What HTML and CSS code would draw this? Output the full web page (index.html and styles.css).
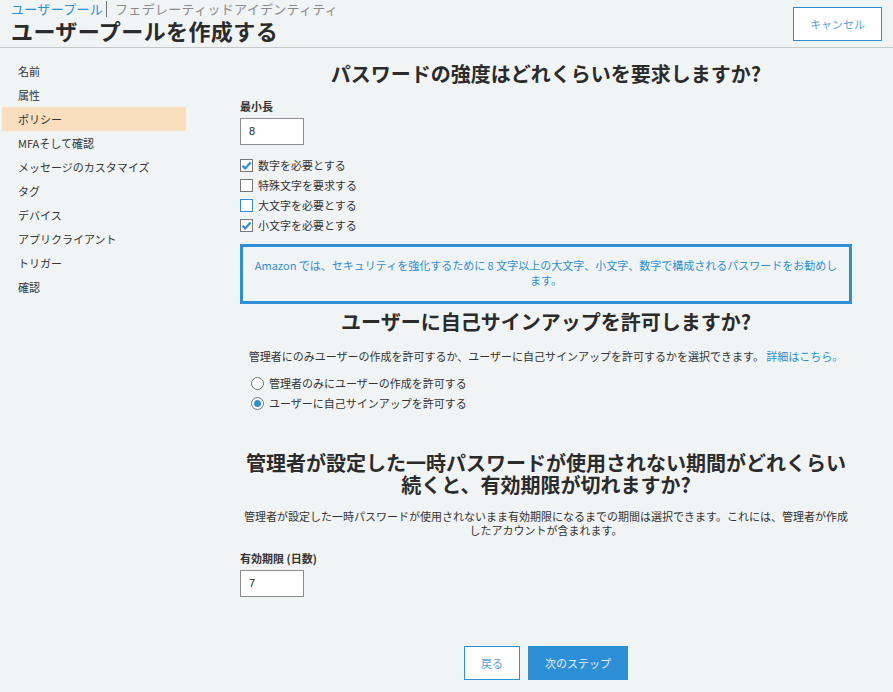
FILE: index.html
```html
<!DOCTYPE html>
<html lang="ja">
<head>
<meta charset="utf-8">
<link rel="stylesheet" href="styles.css">
</head>
<body>
<header class="header">
  <div class="header-left">
    <div class="crumbs"><a class="crumb-link">ユーザープール</a><span class="crumb-other">フェデレーティッドアイデンティティ</span></div>
    <h1 class="page-title">ユーザープールを作成する</h1>
  </div>
  <button class="btn btn-outline cancel">キャンセル</button>
</header>
<div class="layout">
  <nav class="sidebar">
    <div class="nav-item">名前</div>
    <div class="nav-item">属性</div>
    <div class="nav-item active">ポリシー</div>
    <div class="nav-item">MFAそして確認</div>
    <div class="nav-item">メッセージのカスタマイズ</div>
    <div class="nav-item">タグ</div>
    <div class="nav-item">デバイス</div>
    <div class="nav-item">アプリクライアント</div>
    <div class="nav-item">トリガー</div>
    <div class="nav-item">確認</div>
  </nav>
  <main class="main">
    <h2 class="section-title first">パスワードの強度はどれくらいを要求しますか?</h2>
    <div class="field-label">最小長</div>
    <div class="input">8</div>
    <div class="checks">
      <div class="check-row"><span class="checkbox checked"><svg viewBox="0 0 13 13" width="13" height="13"><path d="M2.5 6.8 L5.2 9.4 L10.6 3.4" fill="none" stroke="#2b8fd6" stroke-width="2.2"/></svg></span>数字を必要とする</div>
      <div class="check-row"><span class="checkbox"></span>特殊文字を要求する</div>
      <div class="check-row"><span class="checkbox focus"></span>大文字を必要とする</div>
      <div class="check-row"><span class="checkbox checked"><svg viewBox="0 0 13 13" width="13" height="13"><path d="M2.5 6.8 L5.2 9.4 L10.6 3.4" fill="none" stroke="#2b8fd6" stroke-width="2.2"/></svg></span>小文字を必要とする</div>
    </div>
    <div class="info-box">Amazon では、セキュリティを強化するために 8 文字以上の大文字、小文字、数字で構成されるパスワードをお勧めします。</div>
    <h2 class="section-title second">ユーザーに自己サインアップを許可しますか?</h2>
    <p class="desc">管理者にのみユーザーの作成を許可するか、ユーザーに自己サインアップを許可するかを選択できます。 <a class="link">詳細はこちら。</a></p>
    <div class="radios">
      <div class="radio-row"><span class="radio"></span>管理者のみにユーザーの作成を許可する</div>
      <div class="radio-row"><span class="radio selected"></span>ユーザーに自己サインアップを許可する</div>
    </div>
    <h2 class="section-title third"><span class="line">管理者が設定した一時パスワードが使用されない期間がどれくらい</span><span class="line">続くと、有効期限が切れますか?</span></h2>
    <p class="desc2">管理者が設定した一時パスワードが使用されないまま有効期限になるまでの期間は選択できます。これには、管理者が作成したアカウントが含まれます。</p>
    <div class="field-label second-label">有効期限 (日数)</div>
    <div class="input">7</div>
    <div class="actions">
      <button class="btn btn-outline back">戻る</button>
      <button class="btn btn-primary next">次のステップ</button>
    </div>
  </main>
</div>
</body>
</html>
```

FILE: styles.css
```css
* { box-sizing: border-box; }
html, body {
  margin: 0;
  padding: 0;
  background: #f1f4f5;
  font-family: "Noto Sans CJK JP", "Liberation Sans", sans-serif;
  color: #333;
}
.header {
  height: 48px;
  border-bottom: 1px solid #c6c9ca;
  display: flex;
  justify-content: space-between;
  align-items: flex-start;
  padding: 0 11px 0 11px;
}
.crumbs {
  font-size: 13px;
  line-height: 18px;
  margin-top: 0;
  display: flex;
  align-items: center;
  letter-spacing: 0.3px;
}
.crumb-link { color: #2b8fd6; padding-right: 3px; }
.crumb-other {
  color: #8a8a8a;
  border-left: 1px solid #777;
  padding-left: 8px;
  line-height: 16px;
}
.page-title {
  margin: 0;
  font-size: 22px;
  line-height: 24px;
  font-weight: 700;
  color: #2b2b2b;
  letter-spacing: 0.4px;
}
.btn {
  font-family: inherit;
  font-size: 11px;
  cursor: pointer;
}
.btn-outline {
  background: #fff;
  border: 1px solid #2d8fd5;
  color: #5a9fd6;
}
.btn-primary {
  background: #2d8fd5;
  border: 1px solid #2d8fd5;
  color: #e8f2fb;
}
.cancel {
  margin-top: 7px;
  width: 89px;
  height: 34px;
}
.layout {
  display: flex;
}
.sidebar {
  width: 186px;
  padding-top: 11px;
  padding-left: 2px;
}
.nav-item {
  height: 24px;
  line-height: 24px;
  font-size: 11px;
  padding-left: 16px;
  color: #333;
}
.nav-item.active { background: #f9dfbd; }
.main {
  width: 612px;
  margin-left: 54px;
  display: flex;
  flex-direction: column;
}
.section-title {
  margin: 0;
  text-align: center;
  font-size: 20px;
  font-weight: 700;
  line-height: 28px;
  color: #2b2b2b;
}
.section-title.first { margin-top: 12px; }
.section-title.second { margin-top: 4px; }
.section-title.third { margin-top: 38px; line-height: 24px; display: flex; flex-direction: column; }
.section-title.third .line { display: block; height: 22px; }
.field-label {
  font-size: 11px;
  font-weight: 700;
  margin-top: 10px;
  line-height: 16px;
  color: #333;
}
.second-label { margin-top: 13px; }
.input {
  margin-top: 4px;
  width: 64px;
  height: 27px;
  background: #fff;
  border: 1px solid #8c8c8c;
  font-family: "Liberation Sans", sans-serif;
  font-size: 11px;
  line-height: 25px;
  padding-left: 8px;
  color: #222;
}
.checks { margin-top: 10px; }
.check-row {
  height: 20px;
  display: flex;
  align-items: center;
  font-size: 11px;
  color: #333;
}
.checkbox {
  width: 13px;
  height: 13px;
  border: 1px solid #767676;
  background: #fff;
  margin-right: 5px;
  position: relative;
  flex: none;
}
.checkbox svg { position: absolute; left: -1px; top: -1px; }
.checkbox.focus { border-color: #2d8fd5; }
.info-box {
  margin-top: 9px;
  border: 3px solid #2d8fd5;
  height: 60px;
  padding: 11px 10px 0;
  text-align: center;
  font-size: 11px;
  line-height: 15px;
  color: #2b8fd6;
}
.desc {
  margin: 12px 0 0;
  text-align: center;
  font-size: 11px;
  line-height: 16px;
  color: #333;
}
.link { color: #2b8fd6; }
.radios { margin-top: 9px; padding-left: 11px; }
.radio-row {
  height: 20px;
  display: flex;
  align-items: center;
  font-size: 11px;
  color: #333;
}
.radio {
  width: 13px;
  height: 13px;
  border-radius: 50%;
  border: 1px solid #767676;
  background: #fff;
  margin-right: 5px;
  flex: none;
  position: relative;
}
.radio.selected::after {
  content: "";
  position: absolute;
  left: 2px;
  top: 2px;
  width: 7px;
  height: 7px;
  border-radius: 50%;
  background: #2b8fd6;
}
.desc2 {
  margin: 14px 0 0;
  text-align: center;
  font-size: 11px;
  line-height: 14px;
  color: #333;
}
.actions {
  display: flex;
  justify-content: center;
  gap: 8px;
  margin-top: 49px;
}
.back { width: 56px; height: 34px; }
.next { width: 100px; height: 34px; }
```
